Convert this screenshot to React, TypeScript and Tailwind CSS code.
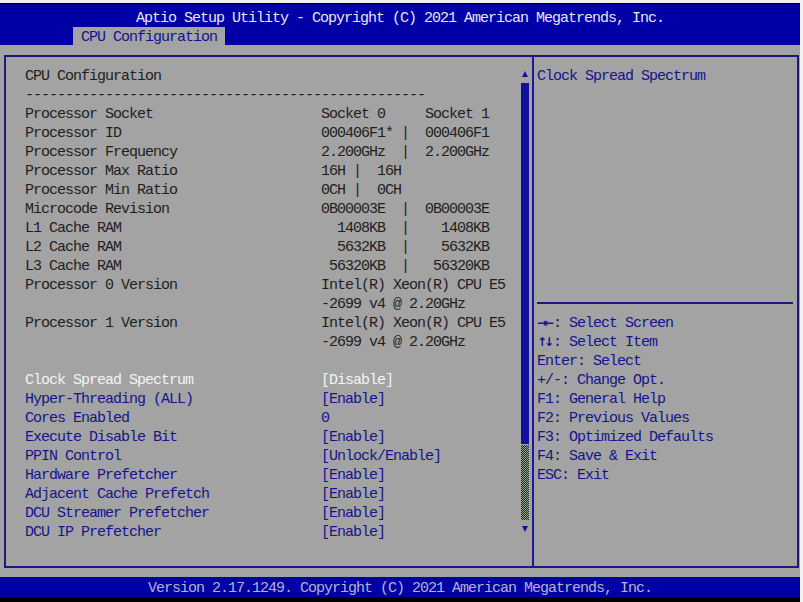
const info = [
  ["Processor Socket", "Socket 0     Socket 1"],
  ["Processor ID", "000406F1* |  000406F1"],
  ["Processor Frequency", "2.200GHz  |  2.200GHz"],
  ["Processor Max Ratio", "16H |  16H"],
  ["Processor Min Ratio", "0CH |  0CH"],
  ["Microcode Revision", "0B00003E  |  0B00003E"],
  ["L1 Cache RAM", "  1408KB  |    1408KB"],
  ["L2 Cache RAM", "  5632KB  |    5632KB"],
  ["L3 Cache RAM", " 56320KB  |   56320KB"],
  ["Processor 0 Version", "Intel(R) Xeon(R) CPU E5"],
  ["", "-2699 v4 @ 2.20GHz"],
  ["Processor 1 Version", "Intel(R) Xeon(R) CPU E5"],
  ["", "-2699 v4 @ 2.20GHz"],
];

const settings = [
  ["Hyper-Threading (ALL)", "[Enable]"],
  ["Cores Enabled", "0"],
  ["Execute Disable Bit", "[Enable]"],
  ["PPIN Control", "[Unlock/Enable]"],
  ["Hardware Prefetcher", "[Enable]"],
  ["Adjacent Cache Prefetch", "[Enable]"],
  ["DCU Streamer Prefetcher", "[Enable]"],
  ["DCU IP Prefetcher", "[Enable]"],
];

const help = [
  ["→←", ": Select Screen"],
  ["↑↓", ": Select Item"],
  ["", "Enter: Select"],
  ["", "+/-: Change Opt."],
  ["", "F1: General Help"],
  ["", "F2: Previous Values"],
  ["", "F3: Optimized Defaults"],
  ["", "F4: Save & Exit"],
  ["", "ESC: Exit"],
];

function Row({ label, value, color }: { label: string; value?: string; color: string }) {
  return (
    <div className={`flex h-[19px] whitespace-pre ${color}`}>
      <span className="w-[296px] shrink-0">{label}</span>
      <span>{value}</span>
    </div>
  );
}

function ScrollBar() {
  return (
    <div className="flex w-[8px] shrink-0 flex-col items-center pt-[14px]">
      <div className="h-0 w-0 border-x-[3px] border-b-[6px] border-x-transparent border-b-[#10109a]" />
      <div className="mt-[6px] h-[361px] w-[8px] bg-[#10109a]" />
      <div className="mt-[1px] h-[75px] w-[8px] bg-[repeating-conic-gradient(#1c1c86_0_25%,#9a9a9a_0_50%)] bg-[length:2px_2px]" />
      <div className="mt-[6px] h-0 w-0 border-x-[3px] border-t-[6px] border-x-transparent border-t-[#10109a]" />
    </div>
  );
}

export default function App() {
  return (
    <div
      className="flex h-[602px] w-[803px] bg-[#f2f2f2] text-[15px] leading-[19px] tracking-[-1px] whitespace-nowrap"
      style={{ fontFamily: '"Liberation Mono", "DejaVu Sans Mono", monospace' }}
    >
      <div className="flex w-[800px] flex-col bg-black">
        <div className="h-[3px] bg-[#f2f2f2]" />
        <div className="h-[1px] bg-black" />

        {/* Header */}
        <div className="flex h-[41px] flex-col bg-[#0000a6] pt-[5px]">
          <div className="h-[18px] text-center text-[#e6e6ee]">
            Aptio Setup Utility - Copyright (C) 2021 American Megatrends, Inc.
          </div>
          <div className="ml-[73px] h-[18px] w-[152px] bg-[#a3a3a3] px-[8px] pt-[1px] text-[#12128e]">
            CPU Configuration
          </div>
        </div>

        {/* Body */}
        <div className="flex h-[532px] flex-col bg-[#a3a3a3] pt-[10px]">
          <div className="ml-[4px] flex h-[513px] w-[795px] border-2 border-[#1a1a7a]">
            <div className="flex w-[526px] shrink-0">
              <div className="flex-1 pl-[19px] pt-[10px]">
                <Row label="CPU Configuration" color="text-[#1e1e1e]" />
                <Row label={"-".repeat(50)} color="text-[#1e1e1e]" />
                {info.map(([l, v], i) => (
                  <Row key={i} label={l} value={v} color="text-[#1e1e1e]" />
                ))}
                <div className="h-[19px]" />
                <Row label="Clock Spread Spectrum" value="[Disable]" color="text-[#f4f4f4]" />
                {settings.map(([l, v]) => (
                  <Row key={l} label={l} value={v} color="text-[#14148e]" />
                ))}
              </div>
              <ScrollBar />
              <div className="w-[3px]" />
            </div>

            <div className="flex flex-1 flex-col border-l-2 border-[#1a1a9a] text-[#14148e]">
              <div className="h-[245px] pl-[3px] pt-[10px]">Clock Spread Spectrum</div>
              <div className="ml-[3px] mr-[4px] h-[2px] bg-[#1a1a7a]" />
              <div className="pl-[3px] pt-[10px]">
                {help.map(([k, t]) => (
                  <div key={t} className="flex h-[19px] items-baseline whitespace-pre">
                    {k && (
                      <span
                        className="w-[16px] shrink-0 text-[12px] font-bold tracking-[-3px]"
                        style={{ fontFamily: '"DejaVu Sans", sans-serif' }}
                      >
                        {k}
                      </span>
                    )}
                    <span>{t}</span>
                  </div>
                ))}
              </div>
            </div>
          </div>
        </div>

        {/* Footer */}
        <div className="h-[20px] bg-[#0000a6] pt-[2px] text-center leading-[20px] text-[#b4b4cc]">
          Version 2.17.1249. Copyright (C) 2021 American Megatrends, Inc.
        </div>
        <div className="flex-1 bg-black" />
      </div>
      <div className="w-[3px]" />
    </div>
  );
}
